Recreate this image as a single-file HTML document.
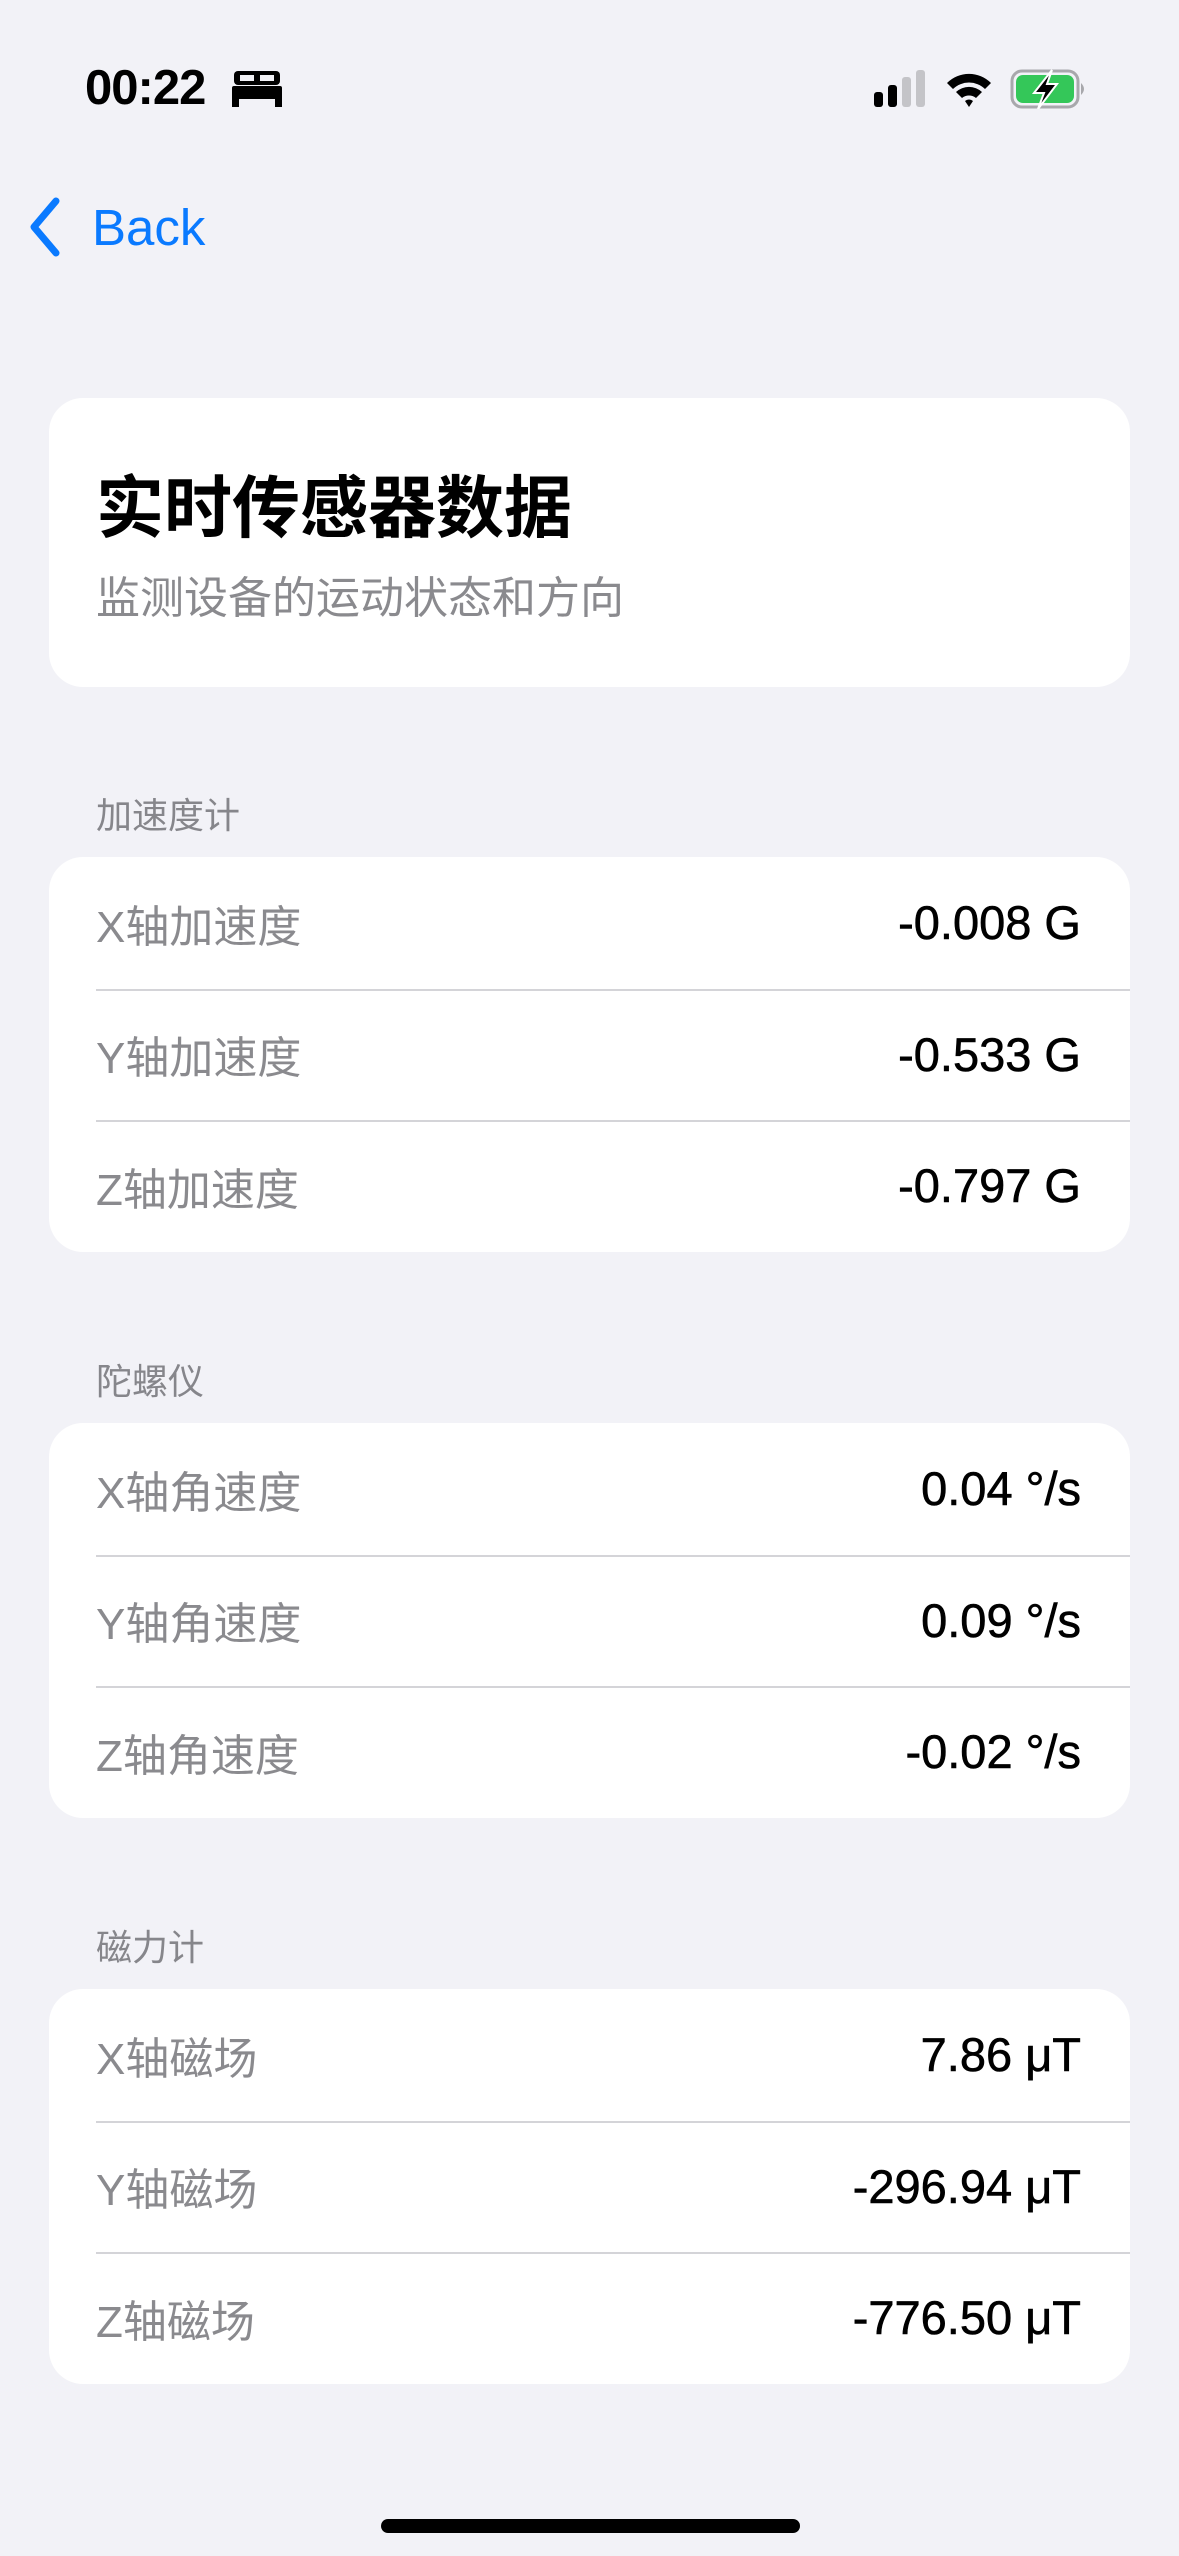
<!DOCTYPE html>
<html><head><meta charset="utf-8">
<style>
*{margin:0;padding:0;box-sizing:border-box}
body{width:1179px;height:2556px;background:#f2f2f7;font-family:"Liberation Sans","Noto Sans CJK SC",sans-serif;position:relative;overflow:hidden}
.abs{position:absolute}
.card{position:absolute;left:49px;width:1081px;background:#fff;border-radius:34px;overflow:hidden}
.row{height:131.5px;position:relative;display:flex;align-items:center;justify-content:space-between;padding:0 49px 0 47px;font-size:44px}
.row .l{color:#8a8a8e}
.row .v{color:#000;font-size:47px;-webkit-text-stroke:0.6px #000}
.row+.row::before{content:"";position:absolute;left:47px;right:0;top:0;height:2px;background:#d4d4d8}
.sec{position:absolute;left:96px;font-size:36px;color:#86868b}
</style></head><body>
<div class="abs" style="left:85px;top:60px;font-size:49px;font-weight:bold;letter-spacing:-1px">00:22</div>
<svg class="abs" style="left:232px;top:71px" width="50" height="36" viewBox="0 0 50 36"><rect x="2" y="0" width="46" height="14" rx="4" fill="#000"/><rect x="8" y="4" width="14" height="6" fill="#f2f2f7"/><rect x="28" y="4" width="14" height="6" fill="#f2f2f7"/><rect x="0" y="15" width="50" height="13" rx="2" fill="#000"/><rect x="0" y="26" width="7" height="10" fill="#000"/><rect x="43" y="26" width="7" height="10" fill="#000"/></svg>
<svg class="abs" style="left:874px;top:70px" width="56" height="38"><rect x="0" y="22" width="9" height="15" rx="3"/><rect x="14" y="15" width="9" height="22" rx="3"/><rect x="28" y="7" width="9" height="30" rx="3" fill="#c4c4c8"/><rect x="42" y="0" width="9" height="37" rx="3" fill="#c4c4c8"/></svg>
<svg class="abs" style="left:944px;top:70px" width="50" height="38" viewBox="0 0 50 38"><path d="M3 13 A31 31 0 0 1 47 13 L41 19 A23 23 0 0 0 9 19Z"/><path d="M12 22 A19 19 0 0 1 38 22 L32 28 A11 11 0 0 0 18 28Z"/><path d="M21 31 A6 6 0 0 1 29 31 L25 37Z"/></svg>
<svg class="abs" style="left:1010px;top:69px" width="78" height="40" viewBox="0 0 78 40"><rect x="2" y="2" width="66" height="36" rx="10" fill="none" stroke="#a8a8ac" stroke-width="3"/><rect x="6" y="6" width="58" height="28" rx="7" fill="#34c759"/><path d="M71 14 Q77 20 71 26Z" fill="#a8a8ac"/><path d="M42 1 L24 24 L34 24 L28 40 L47 15 L37 15 Z" fill="#000" stroke="#fff" stroke-width="2"/></svg>
<svg class="abs" style="left:26px;top:197px" width="38" height="60"><path d="M30 4 L8 30 L30 56" fill="none" stroke="#0a7aff" stroke-width="7" stroke-linecap="round" stroke-linejoin="round"/></svg>
<div class="abs" style="left:92px;top:198px;font-size:51px;color:#0a7aff">Back</div>

<div class="card" style="top:398px;height:289px">
<div class="abs" style="left:47px;top:55px;font-size:68px;font-weight:bold">实时传感器数据</div>
<div class="abs" style="left:47px;top:164px;font-size:44px;color:#8a8a8e">监测设备的运动状态和方向</div>
</div>

<div class="sec" style="top:787px">加速度计</div>
<div class="card" style="top:857px">
<div class="row"><span class="l">X轴加速度</span><span class="v">-0.008 G</span></div>
<div class="row"><span class="l">Y轴加速度</span><span class="v">-0.533 G</span></div>
<div class="row"><span class="l">Z轴加速度</span><span class="v">-0.797 G</span></div>
</div>

<div class="sec" style="top:1353px">陀螺仪</div>
<div class="card" style="top:1423px">
<div class="row"><span class="l">X轴角速度</span><span class="v">0.04 °/s</span></div>
<div class="row"><span class="l">Y轴角速度</span><span class="v">0.09 °/s</span></div>
<div class="row"><span class="l">Z轴角速度</span><span class="v">-0.02 °/s</span></div>
</div>

<div class="sec" style="top:1919px">磁力计</div>
<div class="card" style="top:1989px">
<div class="row"><span class="l">X轴磁场</span><span class="v">7.86 μT</span></div>
<div class="row"><span class="l">Y轴磁场</span><span class="v">-296.94 μT</span></div>
<div class="row"><span class="l">Z轴磁场</span><span class="v">-776.50 μT</span></div>
</div>

<div class="abs" style="left:381px;top:2519px;width:419px;height:14px;border-radius:7px;background:#000"></div>
</body></html>
